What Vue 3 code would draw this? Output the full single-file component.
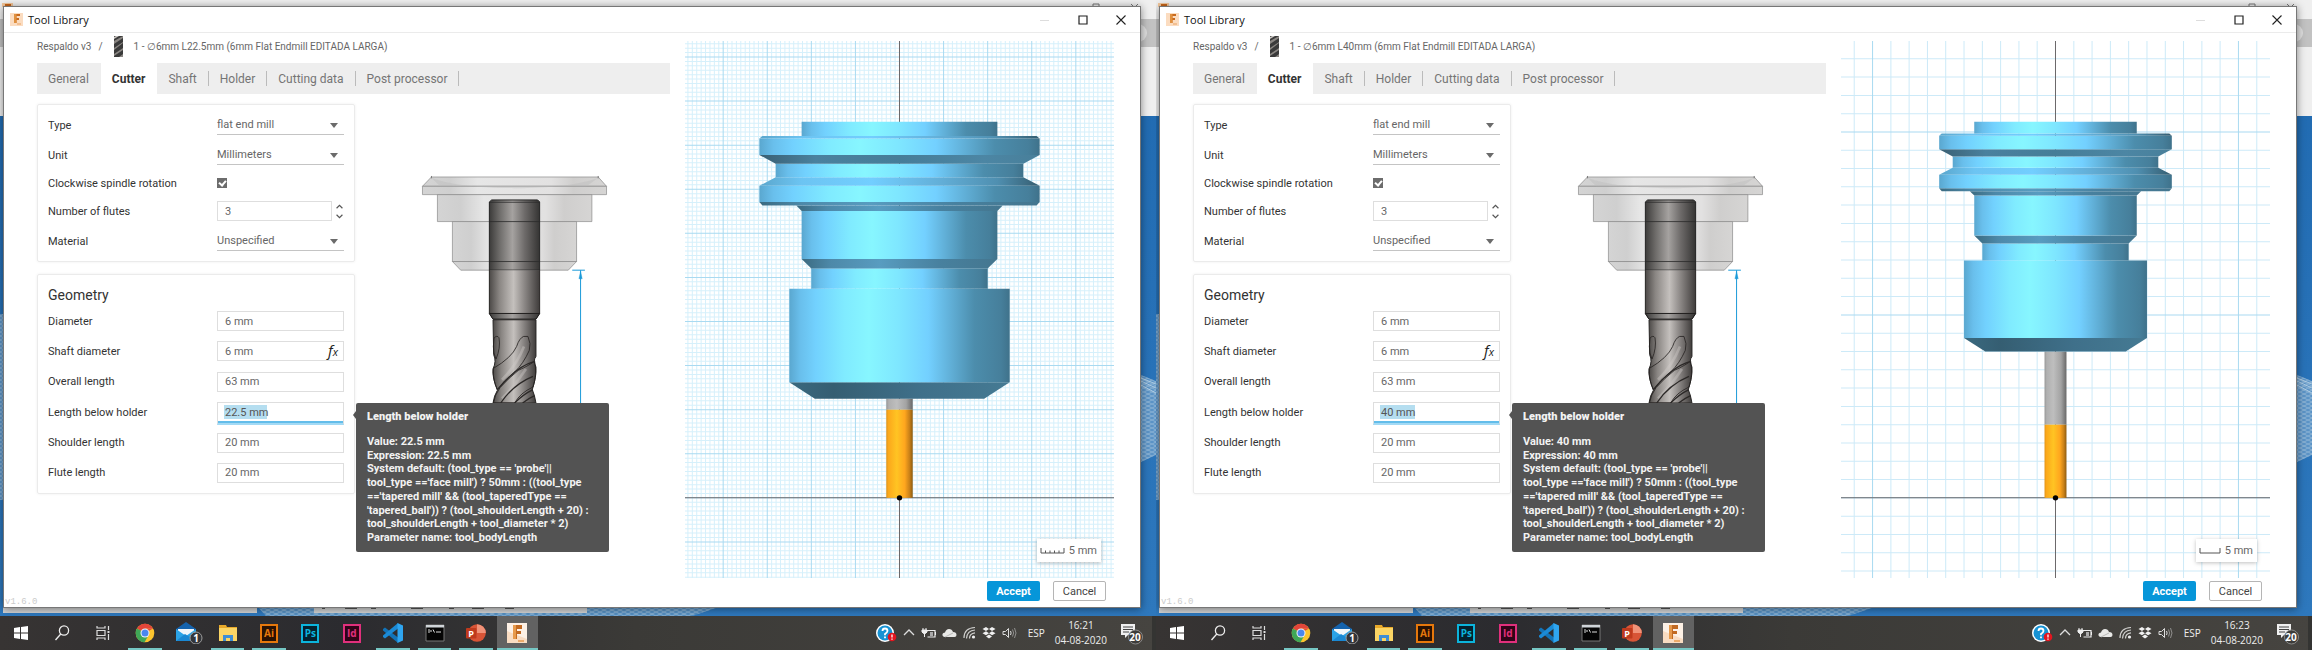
<script setup>
const tabs = ['General', 'Cutter', 'Shaft', 'Holder', 'Cutting data', 'Post processor']

const defaultRule = [
  "System default: (tool_type == 'probe'||",
  "tool_type =='face mill') ? 50mm : ((tool_type",
  "=='tapered mill' && (tool_taperedType ==",
  "'tapered_ball')) ? (tool_shoulderLength + 20) :",
  'tool_shoulderLength + tool_diameter * 2)',
  'Parameter name: tool_bodyLength',
]

// Millimetres: [half width at top, half width at bottom, top, bottom, shade], measured up from the holder nose
const holderProfile = [
  [25, 19.2, 3.7, 0, 'under'],
  [25, 25, 24.9, 3.7, 'wall'],
  [20, 20, 29.5, 24.9, 'wall'],
  [22.2, 20, 31.7, 29.5, 'cut'],
  [22.2, 22.2, 42.6, 31.7, 'wall'],
  [23.4, 22.2, 43.8, 42.6, 'cut'],
  [31.8, 31.1, 44.6, 43.8, 'cut'],
  [31.8, 31.8, 48.3, 44.6, 'wall'],
  [28.1, 31.8, 50.2, 48.3, 'slope'],
  [28.1, 28.1, 53.3, 50.2, 'wall'],
  [31.8, 28.1, 55.3, 53.3, 'groove'],
  [31.8, 31.8, 59, 55.3, 'wall'],
  [31.1, 31.8, 59.6, 59, 'slope'],
  [22.2, 22.2, 62.8, 59.6, 'wall'],
]

const VIEW_W = 429
const VIEW_H = 536
const CX = 214.5
const CY = 456

function buildScene(scale, below, step, major) {
  const pt = (x, y) => `${(CX + x * scale).toFixed(1)},${(CY - y * scale).toFixed(1)}`
  const holder = holderProfile.map(([ht, hb, top, bottom, shade]) => ({
    shade,
    points: [pt(-ht, below + top), pt(ht, below + top), pt(hb, below + bottom), pt(-hb, below + bottom)].join(' '),
  }))
  const lines = []
  const gap = step * scale
  for (let i = -140; i <= 140; i++) {
    const x = CX + i * gap
    const y = CY + i * gap
    const strong = i % major === 0
    if (x > 0 && x < VIEW_W) lines.push({ strong, d: `M${x.toFixed(1)} 0V${VIEW_H}` })
    if (y > 0 && y < VIEW_H) lines.push({ strong, d: `M0 ${y.toFixed(1)}H${VIEW_W}` })
  }
  lines.sort((a, b) => a.strong - b.strong)
  return {
    holder,
    lines,
    fine: step === 1,
    toolX: CX - 3 * scale,
    toolW: 6 * scale,
    shankY: CY - below * scale,
    fluteY: CY - 20 * scale,
    shankH: (below - 20) * scale,
    fluteH: 20 * scale,
  }
}

const desktops = [
  {
    id: 'a', length: '22.5', time: '16:21', mark: '43px',
    ruler: 'M1 1V6H24V1M5.500 3.500V6M10 3.500V6M14.500 3.500V6M19 3.500V6', rulerW: 25,
    scene: buildScene(4.4, 22.5, 1, 10),
  },
  {
    id: 'b', length: '40', time: '16:23', mark: '35px',
    ruler: 'M1 1V6H21V1', rulerW: 22,
    scene: buildScene(3.652, 40, 5, 10),
  },
]

function geometryOf(d) {
  return [
    { key: 'diameter', label: 'Diameter', value: '6 mm' },
    { key: 'shaft', label: 'Shaft diameter', value: '6 mm', fx: true },
    { key: 'overall', label: 'Overall length', value: '63 mm' },
    { key: 'below', label: 'Length below holder', value: `${d.length} mm`, active: true },
    { key: 'shoulder', label: 'Shoulder length', value: '20 mm' },
    { key: 'flute', label: 'Flute length', value: '20 mm' },
  ]
}

const apps = [
  { name: 'Start' }, { name: 'Search' }, { name: 'Task view' },
  { name: 'Chrome', open: true }, { name: 'Mail' }, { name: 'Explorer', open: true },
  { name: 'Illustrator', open: true, tile: 'Ai', tone: 'ai' },
  { name: 'Photoshop', tile: 'Ps', tone: 'ps' },
  { name: 'InDesign', tile: 'Id', tone: 'id' },
  { name: 'Code', open: true }, { name: 'Terminal', open: true },
  { name: 'PowerPoint', open: true }, { name: 'Fusion', open: true, current: true },
]
</script>

<template>
  <main class="page">
    <section v-for="d in desktops" :key="d.id" class="desktop">
      <svg class="backdrop" viewBox="0 0 1156 616" preserveAspectRatio="none" aria-hidden="true">
        <defs>
          <linearGradient :id="d.id + 'sky'" x1="0" y1="0" x2="0" y2="1">
            <stop offset="0" stop-color="#1f69b0" /><stop offset="1" stop-color="#2e78bd" />
          </linearGradient>
          <pattern :id="d.id + 'mesh'" width="8" height="4" patternUnits="userSpaceOnUse">
            <path d="M0 0L8 4M0 4L8 0" stroke="#a6c5de" stroke-width=".6" fill="none" />
          </pattern>
        </defs>
        <rect width="1156" height="616" :fill="`url(#${d.id}sky)`" />
        <rect width="1156" height="116" fill="#efefef" />
        <rect y="19" width="1156" height="28" fill="#c2c2c2" />
        <circle cx="1138" cy="33" r="9" fill="#dedede" />
        <path d="M0 314h4v186h-4zM1141 375l15 6v74l-15 7z" fill="#5b93c6" />
        <path d="M0 314h4v186h-4zM1141 375l15 6v74l-15 7z" :fill="`url(#${d.id}mesh)`" />
        <path d="M1141 378l15 6M1141 381l15 7M1141 385l15 8" stroke="#c3d9ea" stroke-width=".8" />
        <path d="M257 606h465l-30 10H266z" fill="#5690c3" />
        <path d="M257 606h465l-30 10H266z" :fill="`url(#${d.id}mesh)`" />
        <path d="M3 606h254v7H3zM314 606h273v7H314z" fill="#d2d3d4" />
        <path d="M322 608h3M345 608h12M371 608h5M411 608h12M449 608h5M472 608h12M505 608h9" stroke="#555" stroke-width="2" />
        <path d="M2 3h11v4H2z" fill="#f3c79c" /><path d="M5 4h6v3H5z" fill="#c9661a" />
        <path d="M1093 6v-2h6v2M1131 4l3 3M1138 4l-3 3" stroke="#777" fill="none" />
      </svg>

      <div class="stage">
        <article class="window">
          <header class="titlebar">
            <svg class="app-icon" viewBox="0 0 13 13" aria-hidden="true">
              <rect width="13" height="13" fill="#fbdcc0" />
              <path d="M4 1h6v2H6.500v2H9v2H6.500v3H4z" fill="#c8691c" />
              <path d="M4 1h2.500v9H4z" fill="#e0913f" />
              <path d="M7 11h4" stroke="#e9a263" />
            </svg>
            <h1>Tool Library</h1>
            <div class="caption">
              <button type="button" aria-label="Minimize" disabled>
                <svg viewBox="0 0 10 10"><path d="M0 5.500h9" stroke="#ddd" /></svg>
              </button>
              <button type="button" aria-label="Maximize">
                <svg viewBox="0 0 10 10"><path d="M1 1h8v8H1z" fill="none" stroke="#222" stroke-width="1.200" /></svg>
              </button>
              <button type="button" aria-label="Close">
                <svg viewBox="0 0 10 10"><path d="M.5.5l9 9M9.500.5l-9 9" stroke="#222" stroke-width="1.100" /></svg>
              </button>
            </div>
          </header>

          <div class="content">
            <div class="editor">
              <nav class="crumbs" aria-label="Location">
                <a href="#">Respaldo v3</a><span class="slash">/</span>
                <svg class="crumb-icon" viewBox="0 0 9 21" aria-hidden="true">
                  <rect width="9" height="21" fill="#3a3a3a" />
                  <path d="M0 5L9 0v2L0 8zM0 12l9-6v1L0 14zM0 18l9-6v2l-9 6zM5 21l4-3v3z" fill="#8b8783" />
                  <path d="M2 0h3L0 3V1z" fill="#c9c5c1" />
                </svg>
                <span>1 - ∅6mm L{{ d.length }}mm (6mm Flat Endmill EDITADA LARGA)</span>
              </nav>

              <div class="tabs" role="tablist">
                <button v-for="t in tabs" :key="t" type="button" role="tab" class="tab"
                  :class="{ selected: t === 'Cutter', plain: t === 'General' }" :aria-selected="t === 'Cutter'">{{ t }}</button>
              </div>

              <div class="workspace">
                <form class="panels" @submit.prevent>
                  <div class="panel">
                    <div class="row">
                      <label :for="d.id + 'type'">Type</label>
                      <span class="picker"><select :id="d.id + 'type'"><option>flat end mill</option></select></span>
                    </div>
                    <div class="row">
                      <label :for="d.id + 'unit'">Unit</label>
                      <span class="picker"><select :id="d.id + 'unit'"><option>Millimeters</option></select></span>
                    </div>
                    <div class="row short">
                      <label :for="d.id + 'cw'">Clockwise spindle rotation</label>
                      <span class="control"><input :id="d.id + 'cw'" type="checkbox" checked /></span>
                    </div>
                    <div class="row">
                      <label :for="d.id + 'flutes'">Number of flutes</label>
                      <span class="control stepper">
                        <input :id="d.id + 'flutes'" type="text" value="3" />
                        <span class="arrows">
                          <button type="button" aria-label="Increase"><svg viewBox="0 0 6 4"><path d="M.5 3.500L3 1l2.500 2.500" /></svg></button>
                          <button type="button" aria-label="Decrease"><svg viewBox="0 0 6 4"><path d="M.5.5L3 3 5.500.5" /></svg></button>
                        </span>
                      </span>
                    </div>
                    <div class="row">
                      <label :for="d.id + 'mat'">Material</label>
                      <span class="picker"><select :id="d.id + 'mat'"><option>Unspecified</option></select></span>
                    </div>
                  </div>

                  <div class="panel geometry">
                    <h2>Geometry</h2>
                    <div class="rows">
                      <div v-for="g in geometryOf(d)" :key="g.key" class="row">
                        <label :for="d.id + g.key">{{ g.label }}</label>
                        <span class="control">
                          <input :id="d.id + g.key" type="text" :value="g.value" :class="{ active: g.active }"
                            :style="g.active ? { '--mark': d.mark } : null" />
                          <i v-if="g.fx" class="fx">f<small>x</small></i>
                        </span>
                        <div v-if="g.active" class="tooltip" role="tooltip">
                          <strong>Length below holder</strong>
                          <span>Value: {{ d.length }} mm</span>
                          <span>Expression: {{ d.length }} mm</span>
                          <span v-for="line in defaultRule" :key="line">{{ line }}</span>
                        </div>
                      </div>
                    </div>
                  </div>
                </form>

                <svg class="diagram" viewBox="0 0 660 730" role="img" aria-label="Length below holder diagram">
                  <defs>
                    <linearGradient :id="d.id + 'glass'">
                      <stop offset="0" stop-color="#d4d4d4" /><stop offset=".15" stop-color="#cfcfcf" />
                      <stop offset=".3" stop-color="#e6e6e6" /><stop offset=".7" stop-color="#e2e1e1" />
                      <stop offset=".82" stop-color="#cfcecd" /><stop offset="1" stop-color="#d6d5d4" />
                    </linearGradient>
                    <linearGradient :id="d.id + 'steel'">
                      <stop offset="0" stop-color="#4c4947" /><stop offset=".2" stop-color="#8a8683" />
                      <stop offset=".48" stop-color="#c4c0bd" /><stop offset=".7" stop-color="#8b8785" />
                      <stop offset="1" stop-color="#3f3c3b" />
                    </linearGradient>
                    <linearGradient :id="d.id + 'dim'">
                      <stop offset="0" stop-color="#3c3b3a" /><stop offset=".2" stop-color="#6d6b69" />
                      <stop offset=".46" stop-color="#a5a2a0" /><stop offset=".7" stop-color="#6e6b6a" />
                      <stop offset="1" stop-color="#353433" />
                    </linearGradient>
                    <linearGradient :id="d.id + 'flute'" x1="0" y1="0" x2="1" y2=".5">
                      <stop offset="0" stop-color="#45413f" /><stop offset=".45" stop-color="#7b7775" />
                      <stop offset=".6" stop-color="#c9c5c2" /><stop offset=".72" stop-color="#6f6b69" />
                      <stop offset="1" stop-color="#4c4846" />
                    </linearGradient>
                  </defs>
                  <g :fill="`url(#${d.id}glass)`" stroke="#858585" stroke-width="2">
                    <path d="M94 51H595L620 79H67z" /><path d="M67 79H620V104H67z" />
                    <path d="M112 104H576V185H112z" /><path d="M157 185H530V305H157z" /><path d="M157 305H530L505 331H182z" />
                  </g>
                  <path d="M94 48V55M595 48V55" stroke="#777" stroke-width="3" />
                  <path d="M94 53C200 95 490 95 595 53L560 79H120z" fill="#bdbdbd" opacity=".45" />
                  <path d="M268 126L275 120H413L419 126V331H268z" :fill="`url(#${d.id}dim)`" stroke="#222" stroke-width="3" />
                  <path d="M268 127H419M268 185H419M268 305H419" stroke="#2b2b2b" stroke-width="3" opacity=".8" />
                  <path d="M268 331H419V461H268z" :fill="`url(#${d.id}steel)`" />
                  <path d="M268 331V461L279 478H408L419 461V331" fill="none" stroke="#262423" stroke-width="3" />
                  <path d="M268 461H419L408 478H279z" :fill="`url(#${d.id}dim)`" stroke="#1e1c1b" stroke-width="3" />
                  <path d="M279 480H408V590Q398 603 408 622Q410 650 397 690Q404 705 408 730H279Q282 708 292 692Q276 650 279 628Q290 604 281 585z"
                    :fill="`url(#${d.id}steel)`" stroke="#262423" stroke-width="3" />
                  <g :fill="`url(#${d.id}flute)`" stroke="#262322" stroke-width="2.500">
                    <path d="M282 535Q291 525 297 534Q302 565 288 598Q279 580 280 560z" />
                    <path d="M280 626Q335 594 350 560Q358 535 371 530H384Q394 552 388 572Q370 612 345 636Q310 664 293 690Q278 665 280 626z" />
                    <path d="M300 684Q325 656 355 632Q390 616 404 604Q412 645 399 682Q360 700 344 730H280Q284 706 300 684z" />
                  </g>
                  <path d="M306 660Q350 616 372 560" fill="none" stroke="#d2cecb" stroke-width="8" opacity=".4" />
                  <path d="M306 716Q350 672 378 628" fill="none" stroke="#c8c4c1" stroke-width="8" opacity=".45" />
                  <path d="M292 690Q350 620 402 606M302 730Q340 674 399 650M344 730Q370 704 399 690M368 730Q388 715 404 708" fill="none" stroke="#2b2827" stroke-width="4" />
                  <g stroke="#1a9ad9" fill="#1a9ad9"><path d="M517 331H555M542 331V730" stroke-width="3" /><path d="M542 334L547 357H537z" /></g>
                </svg>
              </div>
            </div>

            <div class="viewer">
              <svg class="scene" :viewBox="`0 0 ${VIEW_W} ${VIEW_H}`" preserveAspectRatio="xMidYMid slice" role="img" aria-label="Tool preview">
                <defs>
                  <linearGradient :id="d.id + 'wall'">
                    <stop offset="0" stop-color="#5aa7cf" /><stop offset=".05" stop-color="#69bfec" />
                    <stop offset=".12" stop-color="#72d1fe" /><stop offset=".25" stop-color="#80ebff" />
                    <stop offset=".36" stop-color="#87f6ff" /><stop offset=".5" stop-color="#7ee6ff" />
                    <stop offset=".63" stop-color="#73d0ff" /><stop offset=".73" stop-color="#61b0d8" />
                    <stop offset=".84" stop-color="#4c8dac" /><stop offset=".96" stop-color="#467f9b" />
                    <stop offset="1" stop-color="#3f728b" />
                  </linearGradient>
                  <linearGradient :id="d.id + 'under'">
                    <stop offset="0" stop-color="#3a697f" /><stop offset=".2" stop-color="#355e72" />
                    <stop offset=".6" stop-color="#3f708a" /><stop offset="1" stop-color="#457a93" />
                  </linearGradient>
                  <linearGradient :id="d.id + 'groove'">
                    <stop offset="0" stop-color="#395f73" /><stop offset=".2" stop-color="#4a819e" />
                    <stop offset=".5" stop-color="#467d98" /><stop offset=".8" stop-color="#4c86a4" /><stop offset="1" stop-color="#487f9a" />
                  </linearGradient>
                  <linearGradient :id="d.id + 'cut'">
                    <stop offset="0" stop-color="#3b6a80" /><stop offset=".15" stop-color="#4d89a9" />
                    <stop offset=".4" stop-color="#589cc0" /><stop offset=".7" stop-color="#48819f" /><stop offset="1" stop-color="#44768f" />
                  </linearGradient>
                  <linearGradient :id="d.id + 'slope'">
                    <stop offset="0" stop-color="#5aa6cc" /><stop offset=".15" stop-color="#6cc4f2" />
                    <stop offset=".4" stop-color="#72ceff" /><stop offset=".65" stop-color="#62aed7" /><stop offset=".85" stop-color="#4f8fb0" /><stop offset="1" stop-color="#355d70" />
                  </linearGradient>
                  <linearGradient :id="d.id + 'gray'">
                    <stop offset="0" stop-color="#979797" /><stop offset=".1" stop-color="#b0b0b0" /><stop offset=".4" stop-color="#bebebe" />
                    <stop offset=".75" stop-color="#a3a3a3" /><stop offset="1" stop-color="#686868" />
                  </linearGradient>
                  <linearGradient :id="d.id + 'gold'">
                    <stop offset="0" stop-color="#e09318" /><stop offset=".08" stop-color="#fba81b" /><stop offset=".4" stop-color="#ffc423" />
                    <stop offset=".7" stop-color="#ffa61e" /><stop offset=".88" stop-color="#c88018" /><stop offset="1" stop-color="#8d5b10" />
                  </linearGradient>
                </defs>
                <path v-for="l in d.scene.lines" :key="l.d" :d="l.d" :class="['grid-line', { strong: l.strong, fine: d.scene.fine }]" />
                <path :d="`M0 ${CY}H${VIEW_W}M${CX} 0V${VIEW_H}`" class="axis" />
                <rect :x="d.scene.toolX" :y="d.scene.shankY" :width="d.scene.toolW" :height="d.scene.shankH" :fill="`url(#${d.id}gray)`" />
                <rect :x="d.scene.toolX" :y="d.scene.fluteY" :width="d.scene.toolW" :height="d.scene.fluteH" :fill="`url(#${d.id}gold)`" />
                <polygon v-for="(h, i) in d.scene.holder" :key="i" :points="h.points" :fill="`url(#${d.id}${h.shade})`" />
                <circle :cx="CX" :cy="CY" r="2.700" />
              </svg>
              <div class="scale">
                <svg :width="d.rulerW" height="7" :viewBox="`0 0 ${d.rulerW} 7`" aria-hidden="true"><path :d="d.ruler" /></svg>
                5 mm
              </div>
            </div>
          </div>

          <footer class="footer">
            <small>v1.6.0</small>
            <button type="button" class="accept">Accept</button>
            <button type="button" class="cancel">Cancel</button>
          </footer>
        </article>
      </div>

      <div class="taskbar">
        <div class="apps">
          <button v-for="a in apps" :key="a.name" type="button" :aria-label="a.name" :class="{ open: a.open, current: a.current }">
            <span v-if="a.tile" class="tile" :class="a.tone">{{ a.tile }}</span>
            <svg v-else-if="a.name === 'Start'" viewBox="0 0 20 20"><path d="M3 5l6-.9V9.600H3zM10 4l7-1v6.600h-7zM3 10.500h6V16l-6-.9zM10 10.500h7V17l-7-1z" fill="#fff" /></svg>
            <svg v-else-if="a.name === 'Search'" viewBox="0 0 20 20" fill="none" stroke="#eee" stroke-width="1.300"><circle cx="12" cy="7.500" r="4.600" /><path d="M8.800 11L3.500 17" /></svg>
            <svg v-else-if="a.name === 'Task view'" viewBox="0 0 20 20" fill="none" stroke="#ddd" stroke-width="1.200"><path d="M4 3v2h8V3M4 7.500h8v5H4zM4 17v-2h8v2M15.500 3v4M15.500 11v6" /><path d="M14.500 8h2v2h-2z" fill="#ddd" stroke="none" /></svg>
            <svg v-else-if="a.name === 'Chrome'" viewBox="0 0 20 20">
              <circle cx="10" cy="10" r="9.300" fill="#fbc42e" />
              <path d="M10 10L1.900 5.400A9.300 9.300 0 0 1 18.100 5.400H10z" fill="#e2453a" />
              <path d="M1.900 5.400A9.300 9.300 0 0 0 9.500 19.300L13.700 12z" fill="#3fa757" />
              <path d="M10 5.400h8.100L10 10z" fill="#e2453a" /><circle cx="10" cy="10" r="4.500" fill="#f4f4f4" /><circle cx="10" cy="10" r="3.500" fill="#4a87ee" />
            </svg>
            <svg v-else-if="a.name === 'Mail'" class="wide" viewBox="0 0 28 22">
              <path d="M1 7L11 0l10 7v12H1z" fill="#1563ad" /><path d="M3 7h16v8H3z" fill="#f1f6fa" /><path d="M1 7l10 7 10-7v12H1z" fill="#2ba3e6" /><path d="M1 19l9-7 11 7z" fill="#1a88d3" />
              <circle cx="21" cy="16" r="6" fill="#33353a" stroke="#9a9a9a" /><text x="21" y="19.500" text-anchor="middle" fill="#fff" font-size="10" font-weight="700">1</text>
            </svg>
            <svg v-else-if="a.name === 'Explorer'" viewBox="0 0 20 20"><path d="M1 2h7l1 2h10v4H1z" fill="#e8a92a" /><path d="M1 5h18v13H1z" fill="#fbd565" /><path d="M5 18v-6h10v6h-3v-3H8v3z" fill="#3e8ed6" /></svg>
            <svg v-else-if="a.name === 'Code'" viewBox="0 0 20 20"><path d="M0 6l2-1.500L15 14.500V20L0 7.500z" fill="#1273b8" /><path d="M0 14l2 1.500L15 5.500V0L0 12.500z" fill="#1b8ad6" /><path d="M14.500 0L20 2.500v15L14.500 20z" fill="#2fa5f0" /></svg>
            <svg v-else-if="a.name === 'Terminal'" viewBox="0 0 20 20"><path d="M1 2h18v16H1z" fill="#050505" stroke="#777" /><path d="M1 2h18v2.500H1z" fill="#cfd4d8" /><path d="M3 7h2M3 9h2M6 7v2M8 6.500l1.500 3M11 9h5" stroke="#ddd" /></svg>
            <svg v-else-if="a.name === 'PowerPoint'" viewBox="0 0 20 20"><circle cx="11" cy="10" r="8.800" fill="#d85436" /><path d="M11 1.200A8.800 8.800 0 0 1 19.800 10H11z" fill="#f09278" /><rect y="5" width="10.500" height="10.500" rx="1" fill="#bf3a1d" /><text x="5.200" y="13.500" text-anchor="middle" fill="#fff" font-size="9" font-weight="700">P</text></svg>
            <svg v-else viewBox="0 0 20 20"><path d="M0 0h20v20H0z" fill="#fdf1e6" /><path d="M0 8l20 8v4H0z" fill="#f9dcc2" /><path d="M6 2h9v4h-5v2h4v3h-4v5H6z" fill="#c26a22" /><path d="M6 2h3v14H6z" fill="#e79a4c" /><path d="M11 18h6" stroke="#e79a4c" stroke-width="1.500" /></svg>
          </button>
        </div>

        <div class="tray">
          <svg width="22" height="20" viewBox="0 0 22 20"><circle cx="10" cy="10" r="9" fill="#fff" /><circle cx="10" cy="10" r="7.500" fill="#1792d3" /><path d="M7.500 8Q7.500 5.500 10 5.500T12.500 8Q12.500 9.300 10 11v1.200M10 13.500v1.800" fill="none" stroke="#fff" stroke-width="1.800" /><circle cx="17" cy="14" r="4.300" fill="#e3151f" /><path d="M17 11.500v3M17 15.500v1.200" stroke="#fff" stroke-width="1.300" /></svg>
          <svg width="12" height="20" viewBox="0 0 12 20"><path d="M1 12l5-5 5 5" fill="none" stroke="#ddd" stroke-width="1.300" /></svg>
          <svg width="15" height="20" viewBox="0 0 15 20"><path d="M6 7.500h8v6.500H6.500M14.500 9v3" fill="none" stroke="#eee" stroke-width="1.200" /><path d="M9 9h3v4H9z" fill="#aaa" /><path d="M2 5v2M5 5v2M1 7h5v2L4.500 10.500h-2L1 9zM3.500 10v4" fill="#eee" stroke="#eee" /></svg>
          <svg width="15" height="20" viewBox="0 0 15 20"><path d="M3 14Q0 13.500.5 11 1 9.500 3 9.500 4 6 7 6q3 0 4 3 3.500 0 3.500 3 0 2-2 2z" fill="#e8e8e6" /><path d="M3 14L11 10" stroke="#b9b9b7" /></svg>
          <svg width="13" height="20" viewBox="0 0 13 20"><g fill="none" stroke="#d0d0ce" stroke-width="1.200"><path d="M1 15Q1 5 12 4.500M3.500 15.500Q4 7.500 12 7M6.500 15.500Q6.500 10.500 12 9.800" /></g><circle cx="10.500" cy="14" r="1.600" fill="#eee" /></svg>
          <svg width="14" height="20" viewBox="0 0 14 20"><path d="M4 4l3 2-3 2-3.500-2zM10 4l3.500 2L10 8 7 6zM4 8.200l3 2-3 2-3.500-2zM10 8.200l3.500 2-3.500 2-3-2zM7 11.500l3 2-3 2-3-2z" fill="#f1f1f1" /></svg>
          <svg width="15" height="20" viewBox="0 0 15 20" fill="none" stroke="#ddd"><path d="M1 8.500h2.500L6.500 5.500v9L3.500 11.500H1z" /><path d="M8.500 8q1.200 2 0 4" /><path d="M10.500 6.500q2.200 3.500 0 7M12.500 5q3 5 0 10" opacity=".5" /></svg>
          <span class="lang">ESP</span>
          <time><span>{{ d.time }}</span><span>04-08-2020</span></time>
          <svg class="notes" width="24" height="24" viewBox="0 0 24 24"><path d="M1 3h14v11H8l-3 3v-3H1z" fill="#f0f0f0" /><path d="M3 6h10M3 8.500h10M3 11h6" stroke="#444" /><circle cx="15.500" cy="16" r="7" fill="#3d3c3a" stroke="#8a8a88" /><text x="15" y="20" text-anchor="middle" fill="#fff" font-size="10" font-weight="700">20</text></svg>
        </div>
      </div>
    </section>
  </main>
</template>

<style>
body { margin: 0; }
</style>

<style scoped>
* { box-sizing: border-box; }
.page { display: grid; grid-template-columns: 1fr 1fr; min-height: 100vh; font-family: Roboto, "Noto Sans", sans-serif; font-size: 11px; color: #333; }
button, input, select { font: inherit; color: inherit; margin: 0; padding: 0; border: 0; background: none; border-radius: 0; outline: 0; }
.desktop { position: relative; display: flex; flex-direction: column; overflow: hidden; background: #2b75ba; }
.backdrop { position: absolute; inset: 0 0 34px; width: 100%; height: calc(100% - 34px); }
.stage { position: relative; flex: 1; display: flex; padding: 6px 15px 8px 3px; }
.window { flex: 1; display: flex; flex-direction: column; background: #fff; border: 1px solid #777; box-shadow: 0 1px 8px rgba(0, 0, 0, .45); }
.titlebar { display: flex; align-items: center; height: 26px; padding-left: 6px; border-bottom: 1px solid #ebebeb; }
.app-icon { width: 13px; height: 13px; margin-right: 5px; }
h1 { margin: 0; font: 400 11px/16px "Open Sans", sans-serif; color: #111; flex: 1; }
.caption { display: flex; }
.caption button { width: 38px; height: 25px; display: grid; place-items: center; }
.caption svg { width: 10px; height: 10px; }
.content { flex: 1; display: grid; grid-template-columns: 666fr 429fr; column-gap: 15px; padding-right: 26px; }
.editor { padding: 3px 0 0 33px; min-width: 0; }
.crumbs { display: flex; align-items: center; height: 21px; font-size: 10px; color: #666; white-space: nowrap; }
.crumbs a { color: inherit; text-decoration: none; }
.slash { margin: 0 11px 0 7px; }
.crumb-icon { width: 9px; height: 21px; margin-right: 11px; }
.tabs { display: flex; height: 31px; margin-top: 6px; background: #eee; font-size: 12px; color: #757575; }
.tab { padding: 0 12px 0 11px; position: relative; }
.tab::after { content: ""; position: absolute; right: 0; top: 8px; height: 15px; border-right: 1px solid #bbb; }
.tab.plain::after, .tab.selected::after { display: none; }
.tab.selected { background: #fff; color: #333; font-weight: 700; }
.workspace { display: flex; align-items: flex-start; gap: 45px; padding-top: 10px; }
.panels { width: 318px; flex: none; display: grid; gap: 12px; }
.panel { display: flex; flex-direction: column; gap: 10px; padding: 10px; border: 1px solid #ebebeb; border-radius: 2px; box-shadow: 0 0 3px rgba(0, 0, 0, .07); }
.row { position: relative; display: flex; align-items: center; justify-content: space-between; height: 20px; }
.row.short { height: 16px; }
.control, .picker { position: relative; display: flex; align-items: center; width: 127px; height: 20px; color: #666; }
.short .control { height: 16px; }
.picker select { width: 100%; height: 20px; appearance: none; border-bottom: 1px solid #c4c4c4; }
.picker::after { content: ""; position: absolute; right: 6px; top: 8px; border: 4px solid transparent; border-top: 5px solid #6b6b6b; border-bottom: 0; pointer-events: none; }
input[type="text"] { width: 100%; height: 20px; padding-left: 7px; border: 1px solid #dedede; }
input[type="checkbox"] { position: relative; appearance: none; width: 10px; height: 10px; background: #6c6c6c; }
input[type="checkbox"]::after { content: ""; position: absolute; left: 3px; top: 1px; width: 3px; height: 5px; border: solid #fff; border-width: 0 2px 2px 0; transform: rotate(40deg); }
.stepper { gap: 4px; }
.arrows { display: flex; flex-direction: column; gap: 5px; width: 8px; flex: none; }
.arrows button { display: block; height: 5px; }
.arrows svg { display: block; width: 7px; height: 5px; fill: none; stroke: #555; }
.geometry { min-height: 220px; gap: 6px; }
h2 { margin: 0; font-weight: 400; font-size: 14px; line-height: 20px; }
.rows { flex: 1; display: flex; flex-direction: column; justify-content: space-between; }
.fx { position: absolute; right: 6px; font: italic 15px/18px "Open Sans", sans-serif; color: #222; }
.fx small { font-size: 11px; }
input.active { height: 23px; margin-top: 3px; border-bottom: 2px solid #a3daf5; box-shadow: inset 0 -2px #63bdea; padding-bottom: 2px; background: linear-gradient(#b5def0, #b5def0) 6px 2px / var(--mark) 14px no-repeat; color: #555; }
.tooltip { position: absolute; z-index: 2; left: calc(100% + 12px); top: 1px; width: 253px; padding: 7px 11px; background: #535353; border-radius: 2px; color: #f2f2f2; font-weight: 700; font-size: 11px; line-height: 1.25; white-space: nowrap; }
.tooltip::before { content: ""; position: absolute; left: -3px; top: 8px; border: 4px solid transparent; border-right: 3px solid #535353; border-left: 0; }
.tooltip span, .tooltip strong { display: block; }
.tooltip strong { margin-bottom: 11px; }
.diagram { flex: none; width: 220px; height: 243px; margin-top: 56px; }
.viewer { position: relative; margin-top: 8px; overflow: hidden; }
.scene { position: absolute; inset: 0; width: 100%; height: 100%; }
.grid-line { stroke: #cdeaf8; stroke-width: 1; fill: none; }
.grid-line.fine { stroke: #d6f0fb; }
.grid-line.strong { stroke: #a9daf1; }
.axis { stroke: #6c696b; stroke-width: 1; fill: none; }
.scale { position: absolute; right: 13px; bottom: 16px; display: flex; align-items: center; gap: 4px; height: 23px; padding: 0 4px 0 3px; background: #fff; box-shadow: 0 1px 4px rgba(0, 0, 0, .25); font-size: 11px; color: #666; }
.scale path { fill: none; stroke: #555; }
.footer { display: flex; align-items: flex-start; justify-content: flex-end; height: 29px; padding: 3px 34px 0 1px; }
.footer small { align-self: flex-end; margin-right: auto; font: 9px/10px "Liberation Mono", monospace; color: #ccc; }
.footer button { height: 20px; width: 53px; border-radius: 2px; font-size: 11px; }
.accept { background: #0696d9; color: #fff; font-weight: 700; }
.cancel { margin-left: 13px; border: 1px solid #b5b5b5; color: #444; }
.taskbar { position: relative; display: flex; justify-content: space-between; height: 34px; background: linear-gradient(90deg, #373433, #2b2b2f 30%, #3b3a37 55%, #464440); color: #eee; font-family: "Open Sans", sans-serif; }
.apps { display: grid; grid-template-columns: repeat(13, 1fr); width: 538px; }
.apps button { display: grid; place-items: center; position: relative; }
.apps svg { width: 20px; height: 20px; }
.apps svg.wide { width: 28px; height: 22px; margin-left: 6px; }
.apps .open::after { content: ""; position: absolute; left: 4px; right: 4px; bottom: 0; height: 2px; background: #76c7c4; }
.apps .current { background: #626262; }
.apps .current::after { left: 0; right: 0; }
.tile { width: 18px; height: 19px; border: 2px solid; font-weight: 700; font-size: 10px; line-height: 14px; }
.ai { color: #e6780c; background: #2a1203; }
.ps { color: #0cb4dc; background: #04222f; }
.id { color: #e0307c; background: #300418; }
.tray { display: flex; align-items: center; gap: 6px; padding-right: 3px; font-size: 10px; border-right: 4px solid #343432; }
.lang { margin-left: 5px; }
time { display: grid; justify-items: center; line-height: 15px; margin: 0 7px 0 4px; }
.notes { margin-right: 5px; }
</style>
